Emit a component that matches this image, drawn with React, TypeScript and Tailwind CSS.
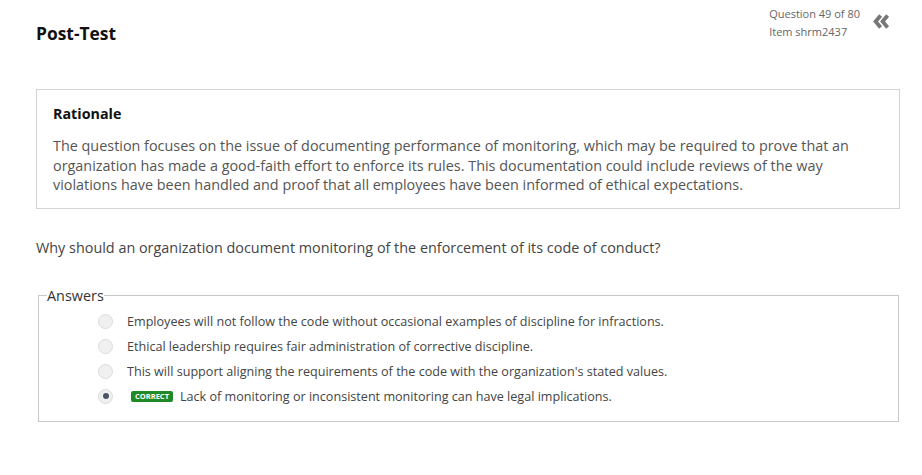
import React from 'react'

const answers = [
  { text: 'Employees will not follow the code without occasional examples of discipline for infractions.', selected: false, correct: false },
  { text: 'Ethical leadership requires fair administration of corrective discipline.', selected: false, correct: false },
  { text: "This will support aligning the requirements of the code with the organization's stated values.", selected: false, correct: false },
  { text: 'Lack of monitoring or inconsistent monitoring can have legal implications.', selected: true, correct: true },
]

function Radio({ checked }: { checked: boolean }) {
  return (
    <span className="flex h-[15px] w-[15px] shrink-0 items-center justify-center rounded-full border border-[#dcdcdc] bg-[#f0f0f0]">
      {checked && <span className="h-[6px] w-[6px] rounded-full bg-[#4a5560]" />}
    </span>
  )
}

export default function App() {
  return (
    <div className="min-h-[475px] w-[922px] bg-white pl-[36px] pr-[22px] font-['Open_Sans',sans-serif] text-[#333]">
      <div className="flex items-start justify-between">
        <h1 className="pt-[22px] text-[17.4px] font-bold leading-[22px] text-[#111]">Post-Test</h1>
        <div className="flex items-start pt-[5px]">
          <div className="text-[11px] leading-[18px] text-[#666]">
            <p>Question 49 of 80</p>
            <p>Item shrm2437</p>
          </div>
          <svg className="ml-[13px] mr-[10px] mt-[9px]" width="17" height="15" viewBox="0 0 17 15">
            <path d="M7.6 1.6 L2.6 7.5 L7.6 13.4" fill="none" stroke="#777" strokeWidth="3.8" strokeLinejoin="miter" />
            <path d="M14.6 1.6 L9.6 7.5 L14.6 13.4" fill="none" stroke="#777" strokeWidth="3.8" strokeLinejoin="miter" />
          </svg>
        </div>
      </div>

      <section className="mt-[45px] border border-[#d4d4d4] px-[16px] pb-[13px] pt-[14px]">
        <h2 className="text-[14.3px] font-bold leading-[20px] text-[#111]">Rationale</h2>
        <p className="mt-[12px] text-[14.4px] leading-[19.5px] text-[#555]">
          The question focuses on the issue of documenting performance of monitoring, which may be required to prove that an
          organization has made a good-faith effort to enforce its rules. This documentation could include reviews of the way
          violations have been handled and proof that all employees have been informed of ethical expectations.
        </p>
      </section>

      <p className="mt-[29px] text-[14.4px] leading-[20px] text-[#444]">
        Why should an organization document monitoring of the enforcement of its code of conduct?
      </p>

      <fieldset className="ml-[2px] mr-[1px] mt-[29px] border border-[#c8c8c8] pb-[17px] pl-[8px]">
        <legend className="text-[14.4px] leading-[18px] text-[#333]">Answers</legend>
        <div className="mt-[9px] flex flex-col gap-[10px] pl-[51px]">
          {answers.map((a) => (
            <div key={a.text} className="flex h-[15px] items-center">
              <Radio checked={a.selected} />
              <div className="ml-[14px] flex items-center text-[12.6px] leading-[15px] text-[#444]">
                {a.correct && (
                  <span className="mr-[7px] ml-[4px] rounded-[2px] bg-[#1f8a26] px-[4px] text-[7.5px] font-bold leading-[11px] text-white">
                    CORRECT
                  </span>
                )}
                <span>{a.text}</span>
              </div>
            </div>
          ))}
        </div>
      </fieldset>
    </div>
  )
}
